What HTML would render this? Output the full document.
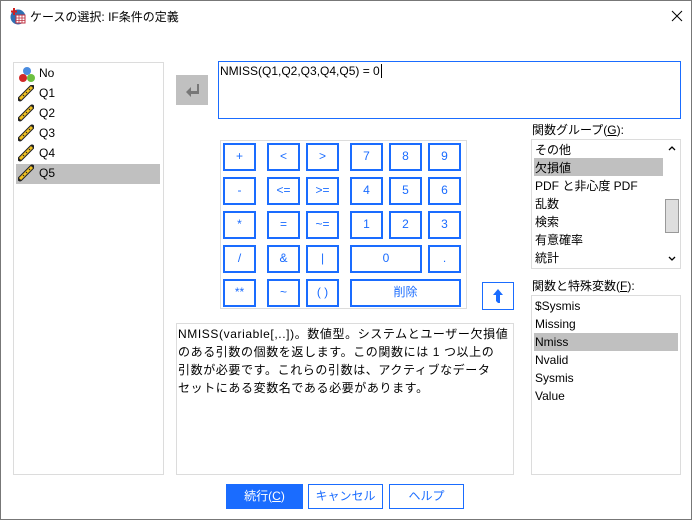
<!DOCTYPE html>
<html><head><meta charset="utf-8"><style>
*{box-sizing:border-box;margin:0;padding:0}
body{width:692px;height:520px;background:#fff;font-family:"Liberation Sans","Noto Sans CJK JP",sans-serif;font-size:12px;color:#000;position:relative;overflow:hidden}
.a{position:absolute}
.win{left:0;top:0;width:692px;height:520px;border:1px solid #777}
.box{border:1px solid #dcdcdc;background:#fff}
.k{position:absolute;border:2px solid #1a6cff;background:#fff;color:#1a6cff;text-align:center;font-size:12px;line-height:23px}
.sel{background:#c0c0c0}
.btn{position:absolute;border:1px solid #1a6cff;text-align:center;line-height:22px;color:#1a6cff;font-size:12px}
</style></head><body>
<div class="a win"></div>
<svg class="a" style="left:9px;top:7px" width="18" height="18" viewBox="0 0 18 18">
<circle cx="9" cy="10" r="7.5" fill="#2f6fb3"/><rect x="7" y="8" width="9" height="8" fill="#fff" stroke="#c03040"/><path d="M7 11h9M7 13.5h9M10 8v8M13 8v8" stroke="#c03040" stroke-width="0.8"/><path d="M5 1v7M2 4.5h6" stroke="#d02020" stroke-width="2"/></svg>
<div class="a" style="left:30px;top:8px;font-size:12px">ケースの選択: IF条件の定義</div>
<svg class="a" style="left:671px;top:10px" width="12" height="12"><path d="M1 1L11 11M11 1L1 11" stroke="#000" stroke-width="1"/></svg>

<div class="a box" style="left:13px;top:62px;width:151px;height:413px"></div>
<svg class="a" style="left:18px;top:66px" width="17" height="17"><circle cx="9" cy="5" r="4" fill="#4a8ce0"/><circle cx="5" cy="12" r="4" fill="#d02828"/><circle cx="13" cy="12" r="4" fill="#6cc040"/></svg>
<div class="a" style="left:39px;top:66px">No</div>
<div class="a sel" style="left:16px;top:164px;width:144px;height:20px"></div>
<svg class="a" style="left:18px;top:85px" width="16" height="100">
<defs><g id="r"><path d="M2 14L14 2" stroke="#222" stroke-width="5" stroke-linecap="round"/><path d="M2 14L14 2" stroke="#f0c020" stroke-width="3"/><path d="M5 10l1 1M8 7l1 1M11 4l1 1" stroke="#222" stroke-width="1"/></g></defs>
<use href="#r" y="0"/><use href="#r" y="20"/><use href="#r" y="40"/><use href="#r" y="60"/><use href="#r" y="80"/></svg>
<div class="a" style="left:39px;top:86px">Q1</div>
<div class="a" style="left:39px;top:106px">Q2</div>
<div class="a" style="left:39px;top:126px">Q3</div>
<div class="a" style="left:39px;top:146px">Q4</div>
<div class="a" style="left:39px;top:166px">Q5</div>

<div class="a" style="left:176px;top:75px;width:32px;height:30px;background:#c0c0c0"></div>
<svg class="a" style="left:183px;top:82px" width="18" height="16"><path d="M14 2v7H8V5L3 10l5 5v-3h8V2z" fill="#777"/></svg>

<div class="a" style="left:218px;top:61px;width:463px;height:58px;border:1px solid #1a6cff"></div>
<div class="a" style="left:220px;top:64px;font-size:12px">NMISS(Q1,Q2,Q3,Q4,Q5) = 0<span style="border-left:1px solid #000;margin-left:1px"></span></div>

<div class="a box" style="left:220px;top:140px;width:247px;height:169px"></div>
<div class="k" style="left:223px;top:143px;width:33px;height:28px">+</div>
<div class="k" style="left:267px;top:143px;width:33px;height:28px">&lt;</div>
<div class="k" style="left:306px;top:143px;width:33px;height:28px">&gt;</div>
<div class="k" style="left:350px;top:143px;width:33px;height:28px">7</div>
<div class="k" style="left:389px;top:143px;width:33px;height:28px">8</div>
<div class="k" style="left:428px;top:143px;width:33px;height:28px">9</div>
<div class="k" style="left:223px;top:177px;width:33px;height:28px">-</div>
<div class="k" style="left:267px;top:177px;width:33px;height:28px">&lt;=</div>
<div class="k" style="left:306px;top:177px;width:33px;height:28px">&gt;=</div>
<div class="k" style="left:350px;top:177px;width:33px;height:28px">4</div>
<div class="k" style="left:389px;top:177px;width:33px;height:28px">5</div>
<div class="k" style="left:428px;top:177px;width:33px;height:28px">6</div>
<div class="k" style="left:223px;top:211px;width:33px;height:28px">*</div>
<div class="k" style="left:267px;top:211px;width:33px;height:28px">=</div>
<div class="k" style="left:306px;top:211px;width:33px;height:28px">~=</div>
<div class="k" style="left:350px;top:211px;width:33px;height:28px">1</div>
<div class="k" style="left:389px;top:211px;width:33px;height:28px">2</div>
<div class="k" style="left:428px;top:211px;width:33px;height:28px">3</div>
<div class="k" style="left:223px;top:245px;width:33px;height:28px">/</div>
<div class="k" style="left:267px;top:245px;width:33px;height:28px">&amp;</div>
<div class="k" style="left:306px;top:245px;width:33px;height:28px">|</div>
<div class="k" style="left:350px;top:245px;width:72px;height:28px">0</div>
<div class="k" style="left:428px;top:245px;width:33px;height:28px">.</div>
<div class="k" style="left:223px;top:279px;width:33px;height:28px">**</div>
<div class="k" style="left:267px;top:279px;width:33px;height:28px">~</div>
<div class="k" style="left:306px;top:279px;width:33px;height:28px">( )</div>
<div class="k" style="left:350px;top:279px;width:111px;height:28px">削除</div>
<div class="a" style="left:482px;top:282px;width:32px;height:28px;border:1px solid #1a6cff"></div>
<svg class="a" style="left:490px;top:287px" width="16" height="18"><path d="M8 2L3 8h3v6l2 2h2V8h3z" fill="#1a6cff"/></svg>

<div class="a box" style="left:176px;top:323px;width:338px;height:152px"></div>
<div class="a" style="left:178px;top:325px;line-height:18px;font-size:12px;white-space:nowrap;letter-spacing:0.6px">NMISS(variable[,..])。数値型。システムとユーザー欠損値<br>のある引数の個数を返します。この関数には 1 つ以上の<br>引数が必要です。これらの引数は、アクティブなデータ<br>セットにある変数名である必要があります。</div>

<div class="a" style="left:532px;top:121px">関数グループ(<u>G</u>):</div>
<div class="a box" style="left:531px;top:139px;width:150px;height:130px"></div>
<div class="a sel" style="left:534px;top:158px;width:129px;height:18px"></div>
<div class="a" style="left:535px;top:141px;line-height:18px">その他<br>欠損値<br>PDF と非心度 PDF<br>乱数<br>検索<br>有意確率<br>統計</div>
<div class="a" style="left:665px;top:199px;width:14px;height:34px;background:#dedede;border:1px solid #999"></div>
<svg class="a" style="left:667px;top:144px" width="10" height="10"><path d="M2 6l3-3 3 3" stroke="#000" fill="none" stroke-width="1.3"/></svg>
<svg class="a" style="left:667px;top:254px" width="10" height="10"><path d="M2 3l3 3 3-3" stroke="#000" fill="none" stroke-width="1.3"/></svg>

<div class="a" style="left:532px;top:277px">関数と特殊変数(<u>F</u>):</div>
<div class="a box" style="left:531px;top:295px;width:150px;height:180px"></div>
<div class="a sel" style="left:534px;top:333px;width:144px;height:18px"></div>
<div class="a" style="left:535px;top:297px;line-height:18px">$Sysmis<br>Missing<br>Nmiss<br>Nvalid<br>Sysmis<br>Value</div>

<div class="btn" style="left:226px;top:484px;width:77px;height:25px;background:#1a6cff;color:#fff">続行(<u>C</u>)</div>
<div class="btn" style="left:308px;top:484px;width:75px;height:25px">キャンセル</div>
<div class="btn" style="left:389px;top:484px;width:75px;height:25px">ヘルプ</div>
</body></html>
